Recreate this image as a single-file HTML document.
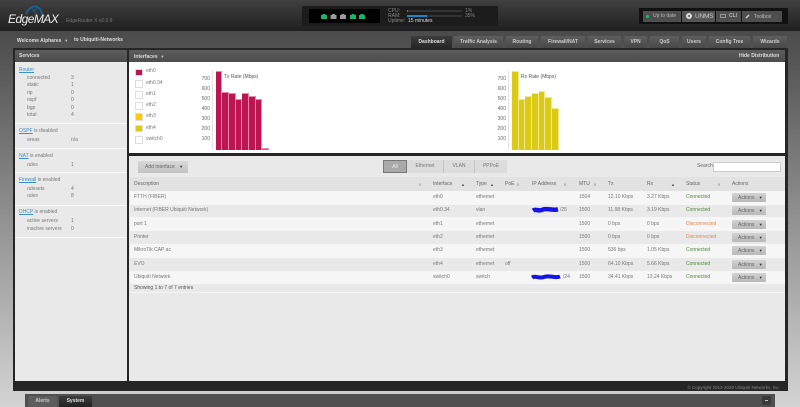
<!DOCTYPE html>
<html><head><meta charset="utf-8"><style>
html,body{margin:0;padding:0;width:800px;height:407px;overflow:hidden}
html{background:#555}
body{position:relative;background:linear-gradient(180deg,#4b4b4b 0,#4b4b4b 31px,#555 60px,#8a8a8a 200px,#d4d4d4 407px);font-family:"Liberation Sans",sans-serif;font-size:5px;color:#777;filter:blur(.35px)}
div{position:absolute;box-sizing:border-box}
.t{position:absolute;line-height:7px;white-space:nowrap;height:7px}
.w{color:#ddd;font-weight:bold}
.l{color:#3d8fc9;text-decoration:underline}
.tab{top:36px;height:12px;background:linear-gradient(#5e5e5e,#484848);color:#ccc;text-align:center;line-height:12px;font-weight:bold;border-radius:1px 1px 0 0}
.hb{top:11px;height:11px;background:#4e4e4e;color:#bbb;line-height:11px;white-space:nowrap}
.bar{background:#bd1550;border:solid #e58aa8;border-width:1px 1px 0 0;bottom:0}
.bar2{background:#dccb16;border:solid #f0e88e;border-width:1px 1px 0 0;bottom:0}
.y{position:absolute;line-height:7px;height:7px;width:20px;text-align:right;color:#666}
.lg{left:135px;width:7.500px;height:7.500px;background:#fff;border:1px solid #ddd}
.btn{left:732px;width:34px;height:9px;background:linear-gradient(#d2d2d2,#b8b8b8);border-radius:1px;color:#666;line-height:9px;padding-left:6px;white-space:nowrap}
.r{left:130px;width:655px;height:14px}
.f{top:160px;height:13px;background:#dcdcdc;text-align:center;line-height:13px;color:#777;border-right:1px solid #c4c4c4}
.g{color:#4c8c3a}.o{color:#e5854f}
.ar{font-size:4px;color:#555}
</style></head><body>
<div style="left:0;top:0;width:800px;height:31px;background:linear-gradient(#404040,#1f1f1f)"></div>

<svg style="position:absolute;left:24px;top:5px" width="20" height="10"><path d="M2 9C4 3 9 1 12 1.500C15 2 17 5 18 9" fill="none" stroke="#1d5f8c" stroke-width="2"/><path d="M7 2L12 9M14 2L9 7" stroke="#1d5f8c" stroke-width="1"/></svg>
<span class="t" style="left:8px;top:12px;height:14px;line-height:14px;font-size:12px;letter-spacing:-.55px;font-style:italic;color:#eee">EdgeMAX</span>
<span class="t" style="left:66px;top:18px;color:#777">EdgeRouter X v2.0.9</span>

<div style="left:302px;top:6px;width:196px;height:20px;background:#1c1c1c"></div>
<div style="left:309px;top:9px;width:71px;height:14px;background:#000"></div>
<svg style="position:absolute;left:320px;top:13px" width="50" height="7"><g fill="#12b76a"><path d="M1 6V2H2.500V1H5.500V2H7V6Z"/><path d="M39 6V2H40.500V1H43.500V2H45V6Z"/><path d="M30 6V2H31.500V1H34.500V2H36V6Z"/></g><g fill="#9a9a9a"><path d="M10.500 6V2H12V1H15V2H16.500V6Z"/><path d="M20 6V2H21.500V1H24.500V2H26V6Z"/></g></svg>
<span class="t" style="left:388px;top:7.500px;color:#888">CPU:</span>
<span class="t" style="left:388px;top:12.500px;color:#888">RAM:</span>
<span class="t" style="left:388px;top:17.500px;color:#888">Uptime:</span>
<div style="left:407px;top:10px;width:55px;height:2px;background:#333"></div>
<div style="left:407px;top:10px;width:1px;height:2px;background:#1e88c7"></div>
<div style="left:407px;top:15px;width:55px;height:2px;background:#333"></div>
<div style="left:407px;top:15px;width:20px;height:2px;background:#1e88c7"></div>
<span class="t" style="left:465px;top:7.500px;color:#888">1%</span>
<span class="t" style="left:465px;top:12.500px;color:#888">35%</span>
<span class="t" style="left:408px;top:17.500px;color:#ddd">15 minutes</span>

<div style="left:639px;top:8px;width:149px;height:16px;background:#111"></div>
<div class="hb" style="left:643px;width:38px;padding-left:10px">Up to date</div>
<div style="left:646px;top:15px;width:3px;height:3px;border-radius:2px;background:#19c46a"></div>
<div class="hb" style="left:682px;width:33px;background:#555;padding-left:13px;color:#ccc;font-size:6.500px;letter-spacing:-.2px">UNMS</div>
<div style="left:686px;top:13px;width:6px;height:6px;border-radius:3px;border:2px solid #ddd"></div>
<div class="hb" style="left:716px;width:25px;padding-left:13px;font-weight:bold">CLI</div>
<div style="left:720px;top:14px;width:6px;height:4px;border:1px solid #999"></div>
<div class="hb" style="left:742px;width:40px;padding-left:12px">Toolbox <span class="ar" style="margin-left:3px">▼</span></div>
<svg style="position:absolute;left:745px;top:13px" width="6" height="6"><path d="M1 5L4 2" stroke="#ccc" stroke-width="1.500"/></svg>

<span class="t w" style="left:17px;top:37px">Welcome Alphares &nbsp;<span class="ar" style="color:#ccc">▼</span></span>
<span class="t w" style="left:74px;top:37px">to Ubiquiti-Networks</span>

<div class="tab" style="left:411px;width:41px;background:linear-gradient(#3d3d3d,#262626);color:#ddd">Dashboard</div>
<div class="tab" style="left:454px;width:49px">Traffic Analysis</div>
<div class="tab" style="left:506px;width:32px">Routing</div>
<div class="tab" style="left:541px;width:44px">Firewall/NAT</div>
<div class="tab" style="left:588px;width:33px">Services</div>
<div class="tab" style="left:624px;width:23px">VPN</div>
<div class="tab" style="left:650px;width:29px">QoS</div>
<div class="tab" style="left:682px;width:24px">Users</div>
<div class="tab" style="left:709px;width:41px">Config Tree</div>
<div class="tab" style="left:753px;width:34px">Wizards</div>

<div style="left:13px;top:48px;width:775px;height:343px;background:#262626"></div>

<!-- services -->
<div style="left:15px;top:50px;width:112px;height:331px;background:#e9e9e9"></div>
<div style="left:15px;top:50px;width:112px;height:12px;background:linear-gradient(#5c5c5c,#4c4c4c)"></div>
<span class="t w" style="left:19px;top:52.500px">Services</span>
<span class="t l" style="left:19px;top:66.500px">Router</span>
<span class="t" style="left:27px;top:74.500px">connected</span><span class="t" style="left:71px;top:74.500px">3</span>
<span class="t" style="left:27px;top:82px">static</span><span class="t" style="left:71px;top:82px">1</span>
<span class="t" style="left:27px;top:89.500px">rip</span><span class="t" style="left:71px;top:89.500px">0</span>
<span class="t" style="left:27px;top:97px">ospf</span><span class="t" style="left:71px;top:97px">0</span>
<span class="t" style="left:27px;top:104.500px">bgp</span><span class="t" style="left:71px;top:104.500px">0</span>
<span class="t" style="left:27px;top:112px">total</span><span class="t" style="left:71px;top:112px">4</span>
<div style="left:15px;top:123px;width:112px;height:1px;background:#f8f8f8"></div>
<span class="t" style="left:19px;top:128px"><span class="l">OSPF</span> is disabled</span>
<span class="t" style="left:27px;top:136.500px">areas</span><span class="t" style="left:71px;top:136.500px">n/a</span>
<div style="left:15px;top:148px;width:112px;height:1px;background:#f8f8f8"></div>
<span class="t" style="left:19px;top:152.500px"><span class="l">NAT</span> is enabled</span>
<span class="t" style="left:27px;top:161.500px">rules</span><span class="t" style="left:71px;top:161.500px">1</span>
<div style="left:15px;top:172px;width:112px;height:1px;background:#f8f8f8"></div>
<span class="t" style="left:19px;top:177px"><span class="l">Firewall</span> is enabled</span>
<span class="t" style="left:27px;top:185.500px">rulesets</span><span class="t" style="left:71px;top:185.500px">4</span>
<span class="t" style="left:27px;top:193px">rules</span><span class="t" style="left:71px;top:193px">8</span>
<div style="left:15px;top:205px;width:112px;height:1px;background:#f8f8f8"></div>
<span class="t" style="left:19px;top:209px"><span class="l">DHCP</span> is enabled</span>
<span class="t" style="left:27px;top:218px">active servers</span><span class="t" style="left:71px;top:218px">1</span>
<span class="t" style="left:27px;top:225.500px">inactive servers</span><span class="t" style="left:71px;top:225.500px">0</span>
<div style="left:15px;top:237px;width:112px;height:1px;background:#f8f8f8"></div>

<!-- interfaces chart -->
<div style="left:129px;top:50px;width:656px;height:103px;background:#fff"></div>
<div style="left:129px;top:50px;width:656px;height:12px;background:linear-gradient(#5c5c5c,#4c4c4c)"></div>
<span class="t w" style="left:134px;top:52.500px">Interfaces &nbsp;<span class="ar" style="color:#ccc">▼</span></span>
<span class="t w" style="left:739px;top:52.500px">Hide Distribution</span>

<div class="lg" style="top:68.500px;background:#bd1550"></div><span class="t" style="left:146px;top:68px">eth0</span>
<div class="lg" style="top:80px"></div><span class="t" style="left:146px;top:79.500px">eth0.34</span>
<div class="lg" style="top:91px"></div><span class="t" style="left:146px;top:90.500px">eth1</span>
<div class="lg" style="top:102px"></div><span class="t" style="left:146px;top:101.500px">eth2</span>
<div class="lg" style="top:113px;background:#ffcb05"></div><span class="t" style="left:146px;top:113px">eth3</span>
<div class="lg" style="top:124.500px;background:#dccb16"></div><span class="t" style="left:146px;top:124.500px">eth4</span>
<div class="lg" style="top:136px"></div><span class="t" style="left:146px;top:135.500px">switch0</span>

<div style="left:212px;top:70px;width:1px;height:80px;background:#e4e4e4"></div>
<span class="y" style="left:190px;top:75.500px">700</span>
<span class="y" style="left:190px;top:85.500px">600</span>
<span class="y" style="left:190px;top:95.500px">500</span>
<span class="y" style="left:190px;top:105.800px">400</span>
<span class="y" style="left:190px;top:115.800px">300</span>
<span class="y" style="left:190px;top:125.800px">200</span>
<span class="y" style="left:190px;top:135.800px">100</span>
<div style="left:215px;top:70px;width:70px;height:79.500px">
<div class="bar" style="left:.7px;width:6.700px;height:78.500px"></div>
<div class="bar" style="left:7.400px;width:6.700px;height:57.700px"></div>
<div class="bar" style="left:14px;width:6.700px;height:57px"></div>
<div class="bar" style="left:20.700px;width:6.700px;height:51px"></div>
<div class="bar" style="left:27.400px;width:6.700px;height:56.700px"></div>
<div class="bar" style="left:34px;width:6.700px;height:53.400px"></div>
<div class="bar" style="left:40.700px;width:6.700px;height:50.400px"></div>
<div class="bar" style="left:47.400px;width:6.700px;height:1.500px;background:#d05a82"></div>
</div>
<div style="left:222px;top:73px;width:48px;height:8px;background:#fff"></div>
<span class="t" style="left:224px;top:73.500px;color:#555">Tx Rate (Mbps)</span>

<div style="left:508px;top:70px;width:1px;height:80px;background:#e4e4e4"></div>
<span class="y" style="left:486px;top:76px">700</span>
<span class="y" style="left:486px;top:86px">600</span>
<span class="y" style="left:486px;top:96px">500</span>
<span class="y" style="left:486px;top:106px">400</span>
<span class="y" style="left:486px;top:116px">300</span>
<span class="y" style="left:486px;top:126px">200</span>
<span class="y" style="left:486px;top:136px">100</span>
<div style="left:512px;top:70px;width:60px;height:79.500px">
<div class="bar2" style="left:0;width:6.700px;height:78.800px"></div>
<div class="bar2" style="left:6.700px;width:6.700px;height:50.800px"></div>
<div class="bar2" style="left:13.300px;width:6.700px;height:53.200px"></div>
<div class="bar2" style="left:20px;width:6.700px;height:56.800px"></div>
<div class="bar2" style="left:26.700px;width:6.700px;height:58.800px"></div>
<div class="bar2" style="left:33.300px;width:6.700px;height:52.800px"></div>
<div class="bar2" style="left:40px;width:6.700px;height:41.800px"></div>
</div>
<div style="left:519px;top:73px;width:48px;height:8px;background:#fff"></div>
<span class="t" style="left:521px;top:73.500px;color:#555">Rx Rate (Mbps)</span>

<!-- table panel -->
<div style="left:129px;top:156px;width:656px;height:225px;background:#e9e9e9"></div>
<div style="left:138px;top:160.500px;width:50px;height:12px;background:linear-gradient(#d8d8d8,#c2c2c2);border-radius:1px;line-height:12px;padding-left:7px;color:#666;white-space:nowrap">Add Interface <span class="ar" style="margin-left:3px;color:#333">▼</span></div>
<div class="f" style="left:383px;width:24px;background:#a9a9a9;border:1px solid #777;color:#eee">All</div>
<div class="f" style="left:407px;width:37px">Ethernet</div>
<div class="f" style="left:444px;width:31px">VLAN</div>
<div class="f" style="left:475px;width:32px;border:0">PPPoE</div>
<span class="t" style="left:697px;top:162.500px;color:#666">Search</span>
<div style="left:713px;top:161.500px;width:68px;height:10px;background:#fff;border:1px solid #ccc"></div>

<div style="left:130px;top:177px;width:655px;height:13.600px;background:#e2e2e2"></div>
<span class="t" style="left:134px;top:180.500px;color:#666">Description</span>
<span class="t ar" style="left:419px;top:180.500px">◊</span>
<span class="t" style="left:433px;top:180.500px;color:#666">Interface</span><span class="t ar" style="left:461px;top:180.500px">▲</span>
<span class="t" style="left:476px;top:180.500px;color:#666">Type</span><span class="t ar" style="left:490px;top:180.500px">▲</span>
<span class="t" style="left:505px;top:180.500px;color:#666">PoE</span><span class="t ar" style="left:517px;top:180.500px">◊</span>
<span class="t" style="left:532px;top:180.500px;color:#666">IP Address</span><span class="t ar" style="left:564px;top:180.500px">◊</span>
<span class="t" style="left:579px;top:180.500px;color:#666">MTU</span><span class="t ar" style="left:594px;top:180.500px">◊</span>
<span class="t" style="left:608px;top:180.500px;color:#666">Tx</span>
<span class="t" style="left:647px;top:180.500px;color:#666">Rx</span><span class="t ar" style="left:671px;top:180.500px">▲</span>
<span class="t" style="left:686px;top:180.500px;color:#666">Status</span><span class="t ar" style="left:718px;top:180.500px">◊</span>
<span class="t" style="left:732px;top:180.500px;color:#666">Actions</span>

<div class="r" style="top:190.600px;background:#f6f6f6"></div>
<div class="r" style="top:217.300px;background:#f6f6f6"></div>
<div class="r" style="top:244px;background:#f6f6f6"></div>
<div class="r" style="top:270.500px;background:#f6f6f6;height:13px"></div>

<span class="t" style="left:134px;top:193.500px">FTTH (FIBER)</span><span class="t" style="left:433px;top:193.500px">eth0</span><span class="t" style="left:476px;top:193.500px">ethernet</span><span class="t" style="left:579px;top:193.500px">1504</span><span class="t" style="left:608px;top:193.500px">12.10 Kbps</span><span class="t" style="left:647px;top:193.500px">3.27 Kbps</span><span class="t g" style="left:686px;top:193.500px">Connected</span>
<div class="btn" style="top:193px">Actions <span class="ar" style="margin-left:3px;color:#333">▼</span></div>

<span class="t" style="left:134px;top:207px">Internet (FIBER Ubiquiti Network)</span><span class="t" style="left:433px;top:207px">eth0.34</span><span class="t" style="left:476px;top:207px">vlan</span><span class="t" style="left:560px;top:207px">/25</span><span class="t" style="left:579px;top:207px">1500</span><span class="t" style="left:608px;top:207px">11.98 Kbps</span><span class="t" style="left:647px;top:207px">3.19 Kbps</span><span class="t g" style="left:686px;top:207px">Connected</span>
<div class="btn" style="top:206px">Actions <span class="ar" style="margin-left:3px;color:#333">▼</span></div>

<span class="t" style="left:134px;top:220.500px">port 1</span><span class="t" style="left:433px;top:220.500px">eth1</span><span class="t" style="left:476px;top:220.500px">ethernet</span><span class="t" style="left:579px;top:220.500px">1500</span><span class="t" style="left:608px;top:220.500px">0 bps</span><span class="t" style="left:647px;top:220.500px">0 bps</span><span class="t o" style="left:686px;top:220.500px">Disconnected</span>
<div class="btn" style="top:219.500px">Actions <span class="ar" style="margin-left:3px;color:#333">▼</span></div>

<span class="t" style="left:134px;top:233.500px">Printer</span><span class="t" style="left:433px;top:233.500px">eth2</span><span class="t" style="left:476px;top:233.500px">ethernet</span><span class="t" style="left:579px;top:233.500px">1500</span><span class="t" style="left:608px;top:233.500px">0 bps</span><span class="t" style="left:647px;top:233.500px">0 bps</span><span class="t o" style="left:686px;top:233.500px">Disconnected</span>
<div class="btn" style="top:232.500px">Actions <span class="ar" style="margin-left:3px;color:#333">▼</span></div>

<span class="t" style="left:134px;top:247px">MikroTik CAP ac</span><span class="t" style="left:433px;top:247px">eth3</span><span class="t" style="left:476px;top:247px">ethernet</span><span class="t" style="left:579px;top:247px">1500</span><span class="t" style="left:608px;top:247px">536 bps</span><span class="t" style="left:647px;top:247px">1.05 Kbps</span><span class="t g" style="left:686px;top:247px">Connected</span>
<div class="btn" style="top:246px">Actions <span class="ar" style="margin-left:3px;color:#333">▼</span></div>

<span class="t" style="left:134px;top:260.500px">EVO</span><span class="t" style="left:433px;top:260.500px">eth4</span><span class="t" style="left:476px;top:260.500px">ethernet</span><span class="t" style="left:505px;top:260.500px">off</span><span class="t" style="left:579px;top:260.500px">1500</span><span class="t" style="left:608px;top:260.500px">64.10 Kbps</span><span class="t" style="left:647px;top:260.500px">5.66 Kbps</span><span class="t g" style="left:686px;top:260.500px">Connected</span>
<div class="btn" style="top:259.500px">Actions <span class="ar" style="margin-left:3px;color:#333">▼</span></div>

<span class="t" style="left:134px;top:273.500px">Ubiquiti Network</span><span class="t" style="left:433px;top:273.500px">switch0</span><span class="t" style="left:476px;top:273.500px">switch</span><span class="t" style="left:563px;top:273.500px">/24</span><span class="t" style="left:579px;top:273.500px">1500</span><span class="t" style="left:608px;top:273.500px">34.41 Kbps</span><span class="t" style="left:647px;top:273.500px">13.24 Kbps</span><span class="t g" style="left:686px;top:273.500px">Connected</span>
<div class="btn" style="top:272.500px">Actions <span class="ar" style="margin-left:3px;color:#333">▼</span></div>

<svg style="position:absolute;left:530px;top:205px" width="34" height="76"><path d="M3 5.500C6 3.500 9 7 13 4.500C17 3 22 5.500 28 4.500" fill="none" stroke="#1414e6" stroke-width="4.500"/><path d="M2 72.500C6 70 8 74 14 72C20 70 25 73.500 30 71.500" fill="none" stroke="#1414e6" stroke-width="4"/></svg>

<span class="t" style="left:134px;top:285px;color:#555">Showing 1 to 7 of 7 entries</span>
<div style="left:129px;top:292px;width:656px;height:1px;background:#f5f5f5"></div>

<span class="t" style="right:20px;top:383.500px;color:#888;font-size:4.500px">© Copyright 2012-2020 Ubiquiti Networks, Inc.</span>

<!-- bottom -->
<div style="left:25px;top:394px;width:750px;height:13px;background:#505050"></div>
<div class="tab" style="left:28px;top:396px;width:29px;height:11px;line-height:11px;background:#5d5d5d">Alerts</div>
<div class="tab" style="left:59px;top:396px;width:33px;height:11px;line-height:11px;background:linear-gradient(#3d3d3d,#222);color:#ddd">System</div>
<div style="left:762px;top:396px;width:9px;height:9px;background:#3a3a3a;border-radius:1px"></div>
<div style="left:765px;top:400px;width:3px;height:1px;background:#ccc"></div>
</body></html>
